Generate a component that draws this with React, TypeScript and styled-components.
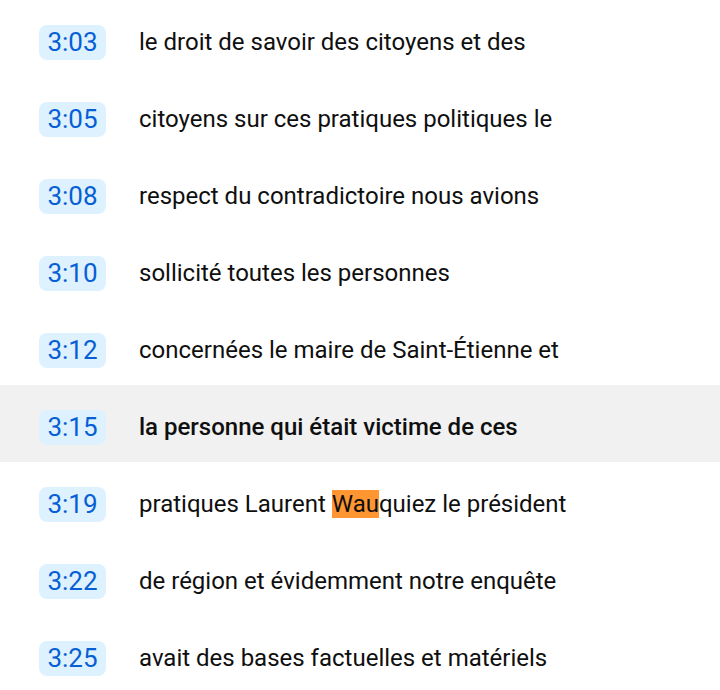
import React from 'react';
import styled, { createGlobalStyle } from 'styled-components';

const GlobalStyle = createGlobalStyle`
  body {
    margin: 0;
    background: #ffffff;
    font-family: Roboto, "Noto Sans", Arial, sans-serif;
  }
`;

const List = styled.div`
  display: flex;
  flex-direction: column;
  width: 720px;
`;

const Row = styled.div<{ $active?: boolean }>`
  display: flex;
  align-items: center;
  height: 77px;
  box-sizing: border-box;
  padding: 7px 0 0 39px;
  background-color: ${(p) => (p.$active ? '#f1f1f1' : 'transparent')};
`;

const Stamp = styled.div`
  display: flex;
  align-items: center;
  justify-content: center;
  width: 67px;
  height: 35px;
  border-radius: 8px;
  background-color: #def1ff;
  color: #065fd4;
  font-size: 26px;
  font-weight: 400;
`;

const Line = styled.div<{ $active?: boolean }>`
  margin-left: 33px;
  font-size: 24px;
  color: #0f0f0f;
  font-weight: ${(p) => (p.$active ? 500 : 400)};
  white-space: nowrap;
`;

const Mark = styled.span`
  background-color: #ff9632;
  color: #0f0f0f;
`;

type Segment = {
  time: string;
  text: React.ReactNode;
  active?: boolean;
};

const segments: Segment[] = [
  { time: '3:03', text: 'le droit de savoir des citoyens et des' },
  { time: '3:05', text: 'citoyens sur ces pratiques politiques le' },
  { time: '3:08', text: 'respect du contradictoire nous avions' },
  { time: '3:10', text: 'sollicité toutes les personnes' },
  { time: '3:12', text: 'concernées le maire de Saint-Étienne et' },
  { time: '3:15', text: 'la personne qui était victime de ces', active: true },
  {
    time: '3:19',
    text: (
      <>
        pratiques Laurent <Mark>Wau</Mark>quiez le président
      </>
    ),
  },
  { time: '3:22', text: 'de région et évidemment notre enquête' },
  { time: '3:25', text: 'avait des bases factuelles et matériels' },
];

const App = () => {
  return (
    <>
      <GlobalStyle />
      <List>
        {segments.map((s) => (
          <Row key={s.time} $active={s.active}>
            <Stamp>{s.time}</Stamp>
            <Line $active={s.active}>{s.text}</Line>
          </Row>
        ))}
      </List>
    </>
  );
};

export default App;
